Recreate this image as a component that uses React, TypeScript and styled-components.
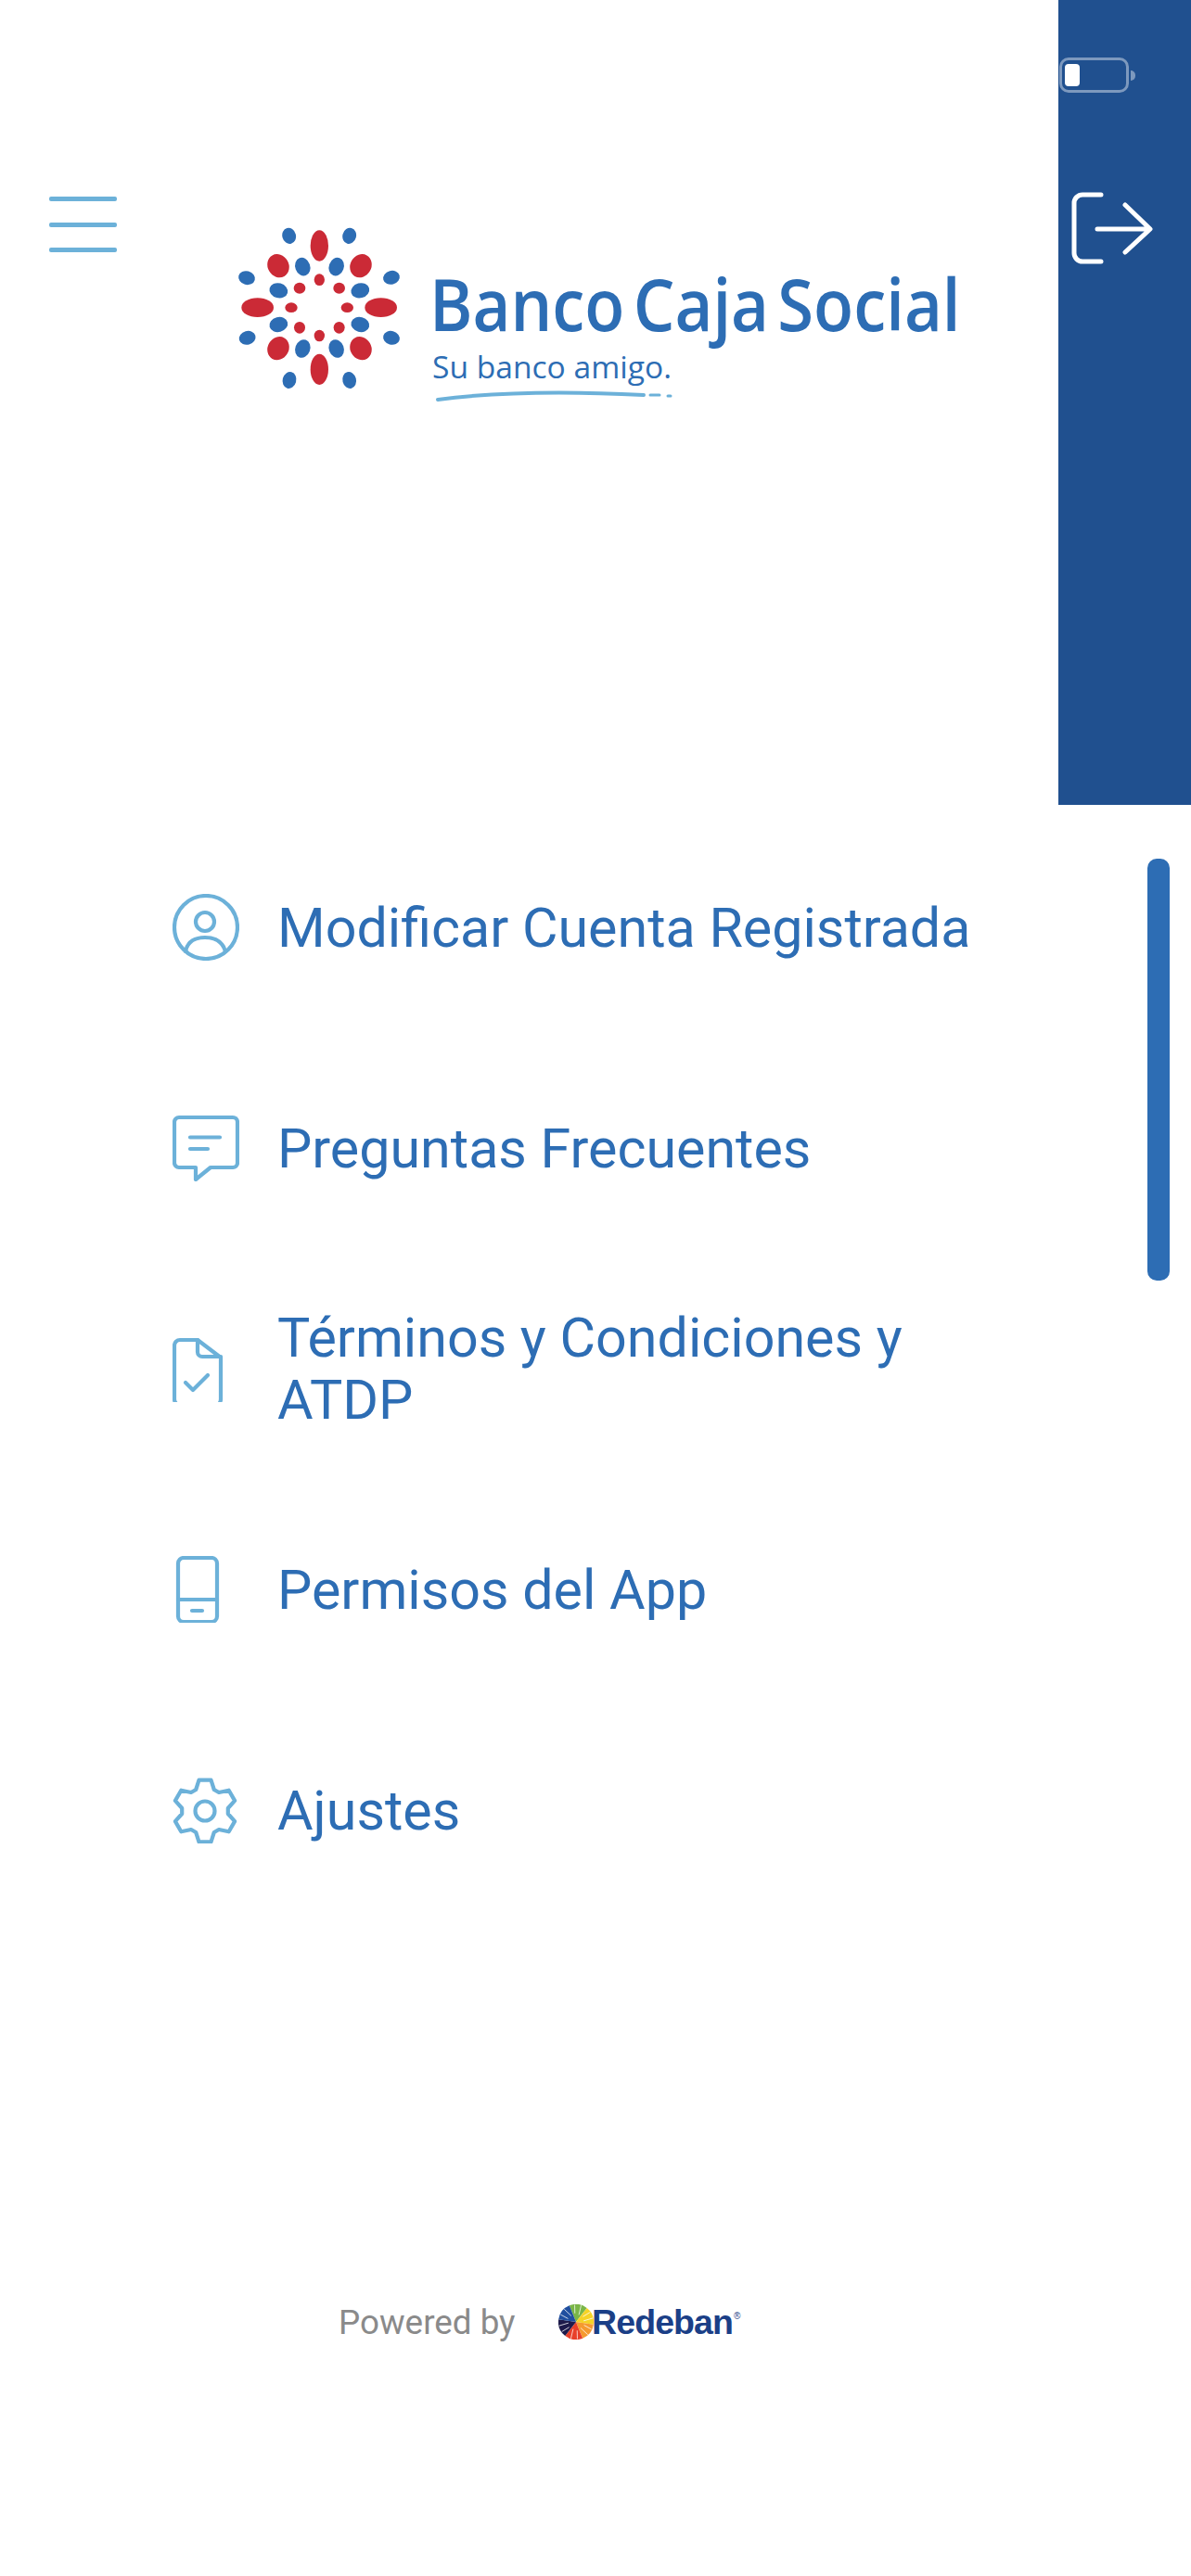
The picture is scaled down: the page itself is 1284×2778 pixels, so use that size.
import React from 'react';
import styled, { createGlobalStyle } from 'styled-components';

const GlobalStyle = createGlobalStyle`
  html, body {
    margin: 0;
    padding: 0;
    background: #fff;
  }
  * {
    box-sizing: border-box;
  }
`;

const Page = styled.div`
  display: flex;
  width: 1284px;
  height: 2778px;
  overflow: hidden;
  background: #fff;
  font-family: Roboto, "Liberation Sans", sans-serif;
`;

const Main = styled.main`
  flex: 1;
  display: flex;
  flex-direction: column;
`;

const Header = styled.header`
  display: flex;
  align-items: flex-start;
  padding: 212px 0 0 53px;
`;

const Hamburger = styled.div`
  display: flex;
  flex-direction: column;
  gap: 22.5px;
  width: 73px;
`;

const HamburgerBar = styled.span`
  display: block;
  height: 5px;
  border-radius: 2px;
  background: #6cb1d9;
`;

const LogoSvg = styled.svg`
  display: block;
  flex: none;
  margin: 28px 0 0 124px;
`;

const Menu = styled.ul`
  list-style: none;
  margin: 441px 0 0;
  padding: 0 0 0 186px;
`;

const MenuRow = styled.li`
  display: flex;
  align-items: center;
  height: 238px;
`;

const IconSvg = styled.svg`
  display: block;
  flex: none;
  width: 72px;
  height: 72px;
  margin-right: 41px;
  fill: none;
  stroke: #6cb1d9;
  stroke-width: 4.2;
  stroke-linecap: round;
  stroke-linejoin: round;
`;

const MenuLabel = styled.span`
  width: 800px;
  font-size: 59.2px;
  line-height: 67px;
  color: #2d6db4;
`;

const Footer = styled.footer`
  display: flex;
  align-items: center;
  height: 60px;
  margin-top: 403px;
  padding-left: 365px;
`;

const Powered = styled.span`
  width: 237px;
  flex: none;
  font-size: 36.8px;
  color: #8a8a8a;
`;

const Redeban = styled.div`
  display: flex;
  align-items: center;
  color: #1b3f87;
  font-family: "Liberation Sans", Arial, sans-serif;
  font-weight: 700;
  font-size: 37.5px;
  letter-spacing: -0.9px;
`;

const RedebanWord = styled.span`
  margin-left: -2px;
`;

const RegMark = styled.sup`
  font-size: 10px;
  font-weight: 400;
  letter-spacing: 0;
  margin: -14px 0 0 1px;
`;

const Side = styled.aside`
  flex: none;
  width: 143.5px;
  display: flex;
  flex-direction: column;
`;

const Panel = styled.div`
  height: 868px;
  background: #20508f;
  padding: 62px 0 0 1.5px;
`;

const Battery = styled.div`
  display: flex;
  align-items: center;
  gap: 2px;
`;

const BatteryShell = styled.div`
  width: 75px;
  height: 38px;
  padding: 4px 3px;
  border: 3px solid rgba(255, 255, 255, 0.42);
  border-radius: 10px;
`;

const BatteryLevel = styled.div`
  width: 16px;
  height: 100%;
  border-radius: 4px;
  background: #fff;
`;

const BatteryNub = styled.div`
  width: 5px;
  height: 11px;
  border-radius: 0 6px 6px 0;
  background: rgba(255, 255, 255, 0.42);
`;

const Logout = styled.svg`
  display: block;
  margin: 107px 0 0 13px;
  fill: none;
  stroke: #fff;
  stroke-width: 5;
  stroke-linecap: round;
  stroke-linejoin: round;
`;

const ScrollThumb = styled.div`
  width: 24px;
  height: 455px;
  margin: 58px 0 0 96.5px;
  border-radius: 10px;
  background: #2d6db4;
`;

const BLUE = '#2d6db4';
const RED = '#cb2a36';

// x, y, rx, ry, rotation: read off the reference, 3 units = 1px
const logoDots: [number, number, number, number, number, string][] = [
  [313, 105, 29, 50, 0, RED],
  [313, 505, 29, 50, 0, RED],
  [113, 305, 52, 31, 0, RED],
  [512, 305, 52, 31, 0, RED],
  [180, 170, 34, 39, -30, RED],
  [447, 170, 34, 39, 30, RED],
  [180, 437, 34, 39, 30, RED],
  [447, 437, 34, 39, -30, RED],
  [215, 73, 22, 26, -15, BLUE],
  [410, 73, 22, 26, 15, BLUE],
  [78, 209, 27, 22, 15, BLUE],
  [546, 208, 27, 22, -15, BLUE],
  [80, 403, 27, 22, -15, BLUE],
  [546, 403, 27, 22, 15, BLUE],
  [216, 540, 22, 27, 15, BLUE],
  [410, 540, 22, 27, -15, BLUE],
  [259, 173, 24, 30, -20, BLUE],
  [368, 173, 24, 30, 20, BLUE],
  [181, 250, 30, 24, 15, BLUE],
  [445, 250, 30, 24, -15, BLUE],
  [181, 360, 30, 24, -15, BLUE],
  [445, 360, 30, 24, 15, BLUE],
  [259, 438, 24, 30, 20, BLUE],
  [368, 438, 24, 30, -20, BLUE],
  [313, 215, 17, 19, 0, RED],
  [249, 242, 19, 18, 0, RED],
  [377, 242, 19, 18, 0, RED],
  [222, 305, 20, 16, 0, RED],
  [403, 305, 20, 16, 0, RED],
  [249, 370, 18, 19, 0, RED],
  [377, 370, 18, 19, 0, RED],
  [313, 396, 17, 19, 0, RED],
];

// svg origin sits at 250,240 of the page
const Logo = () => (
  <LogoSvg width="800" height="200" viewBox="0 0 800 200">
    <g transform="translate(-10 -10) scale(0.3333)">
      {logoDots.map(([x, y, rx, ry, rot, color], i) => (
        <ellipse key={i} cx={x} cy={y} rx={rx} ry={ry} fill={color} transform={`rotate(${rot} ${x} ${y})`} />
      ))}
    </g>
    <text
      transform="translate(213 117) scale(0.905 1)"
      fill={BLUE}
      fontFamily="'Open Sans', sans-serif"
      fontWeight="600"
      fontSize="78"
      wordSpacing="-10"
    >
      Banco Caja Social
    </text>
    <text
      transform="translate(216 168) scale(1.018 1)"
      fill={BLUE}
      fontFamily="'Open Sans', sans-serif"
      fontWeight="500"
      fontSize="33"
    >
      Su banco amigo.
    </text>
    <path d="M222 191 C290 182 370 182 444 186" fill="none" stroke="#6cb1d9" strokeWidth="4" strokeLinecap="round" />
    <path d="M451 186 H461 M470 187 H473" fill="none" stroke="#6cb1d9" strokeWidth="3" strokeLinecap="round" />
  </LogoSvg>
);

const gearPoints = () => {
  const pts: string[] = [];
  for (let i = 0; i < 6; i++) {
    const a = -90 + i * 60;
    [[-23, 25], [-11, 34], [11, 34], [23, 25]].forEach(([d, r]) => {
      const rad = ((a + d) * Math.PI) / 180;
      pts.push(`${(35 + r * Math.cos(rad)).toFixed(1)},${(37 + r * Math.sin(rad)).toFixed(1)}`);
    });
  }
  return pts.join(' ');
};

const menuItems: { label: string; icon: React.ReactNode }[] = [
  {
    label: 'Modificar Cuenta Registrada',
    icon: (
      <>
        <circle cx="36" cy="36" r="34" />
        <circle cx="35" cy="30" r="10" />
        <path d="M14 62 C16 51 25 47 35 47 C45 47 54 51 57 62" />
      </>
    ),
  },
  {
    label: 'Preguntas Frecuentes',
    icon: (
      <>
        <path d="M7 3 H65 a5 5 0 0 1 5 5 V52 a5 5 0 0 1 -5 5 H41 L25 70 V57 H7 a5 5 0 0 1 -5 -5 V8 a5 5 0 0 1 5 -5 Z" />
        <path d="M19 24.5 H51 M19 37 H38" />
      </>
    ),
  },
  {
    label: 'Términos y Condiciones y ATDP',
    icon: (
      <>
        <path d="M8 5 H27 L52 24 V69 a6 6 0 0 1 -6 6 H8 a6 6 0 0 1 -6 -6 V11 a6 6 0 0 1 6 -6 Z" />
        <path d="M27 5 V18 a5 5 0 0 0 5 5 H52" />
        <path d="M14 51 L22 59 L38 43" />
      </>
    ),
  },
  {
    label: 'Permisos del App',
    icon: (
      <>
        <rect x="6" y="2" width="42" height="69" rx="6" />
        <path d="M6 47 H48 M21 59 H32" />
      </>
    ),
  },
  {
    label: 'Ajustes',
    icon: (
      <>
        <polygon points={gearPoints()} />
        <circle cx="35" cy="37" r="10.5" />
      </>
    ),
  },
];

const blades = [
  { color: '#7ab648', rotate: 8 },
  { color: '#f5d327', rotate: 68 },
  { color: '#f59a2f', rotate: 128 },
  { color: '#e8402a', rotate: 188 },
  { color: '#1d1a4b', rotate: 248 },
  { color: '#1f4f9f', rotate: 308 },
];

const Pinwheel = () => (
  <svg width="38" height="38" viewBox="-19 -19 38 38">
    {blades.map(b => (
      <g key={b.rotate} transform={`rotate(${b.rotate})`}>
        <path d="M0 0 L-9.5 -16.5 A19 19 0 0 1 9.5 -16.5 Z" fill={b.color} />
        <path d="M-2.5 -9 L-4 -18 M2 -8 L3 -18.5" stroke="#fff" strokeWidth="0.7" fill="none" />
      </g>
    ))}
  </svg>
);

const App: React.FC = () => {
  return (
    <Page>
      <GlobalStyle />
      <Main>
        <Header>
          <Hamburger>
            <HamburgerBar />
            <HamburgerBar />
            <HamburgerBar />
          </Hamburger>
          <Logo />
        </Header>
        <Menu>
          {menuItems.map(item => (
            <MenuRow key={item.label}>
              <IconSvg viewBox="0 0 72 72">{item.icon}</IconSvg>
              <MenuLabel>{item.label}</MenuLabel>
            </MenuRow>
          ))}
        </Menu>
        <Footer>
          <Powered>Powered by</Powered>
          <Redeban>
            <Pinwheel />
            <RedebanWord>Redeban</RedebanWord>
            <RegMark>®</RegMark>
          </Redeban>
        </Footer>
      </Main>
      <Side>
        <Panel>
          <Battery>
            <BatteryShell>
              <BatteryLevel />
            </BatteryShell>
            <BatteryNub />
          </Battery>
          <Logout width="90" height="80" viewBox="0 0 90 80">
            <path d="M32 3 H12 a9 9 0 0 0 -9 9 V66 a9 9 0 0 0 9 9 H32" />
            <path d="M28 40 H84 M58 14 L85 40 L58 65" />
          </Logout>
        </Panel>
        <ScrollThumb />
      </Side>
    </Page>
  );
};

export default App;
